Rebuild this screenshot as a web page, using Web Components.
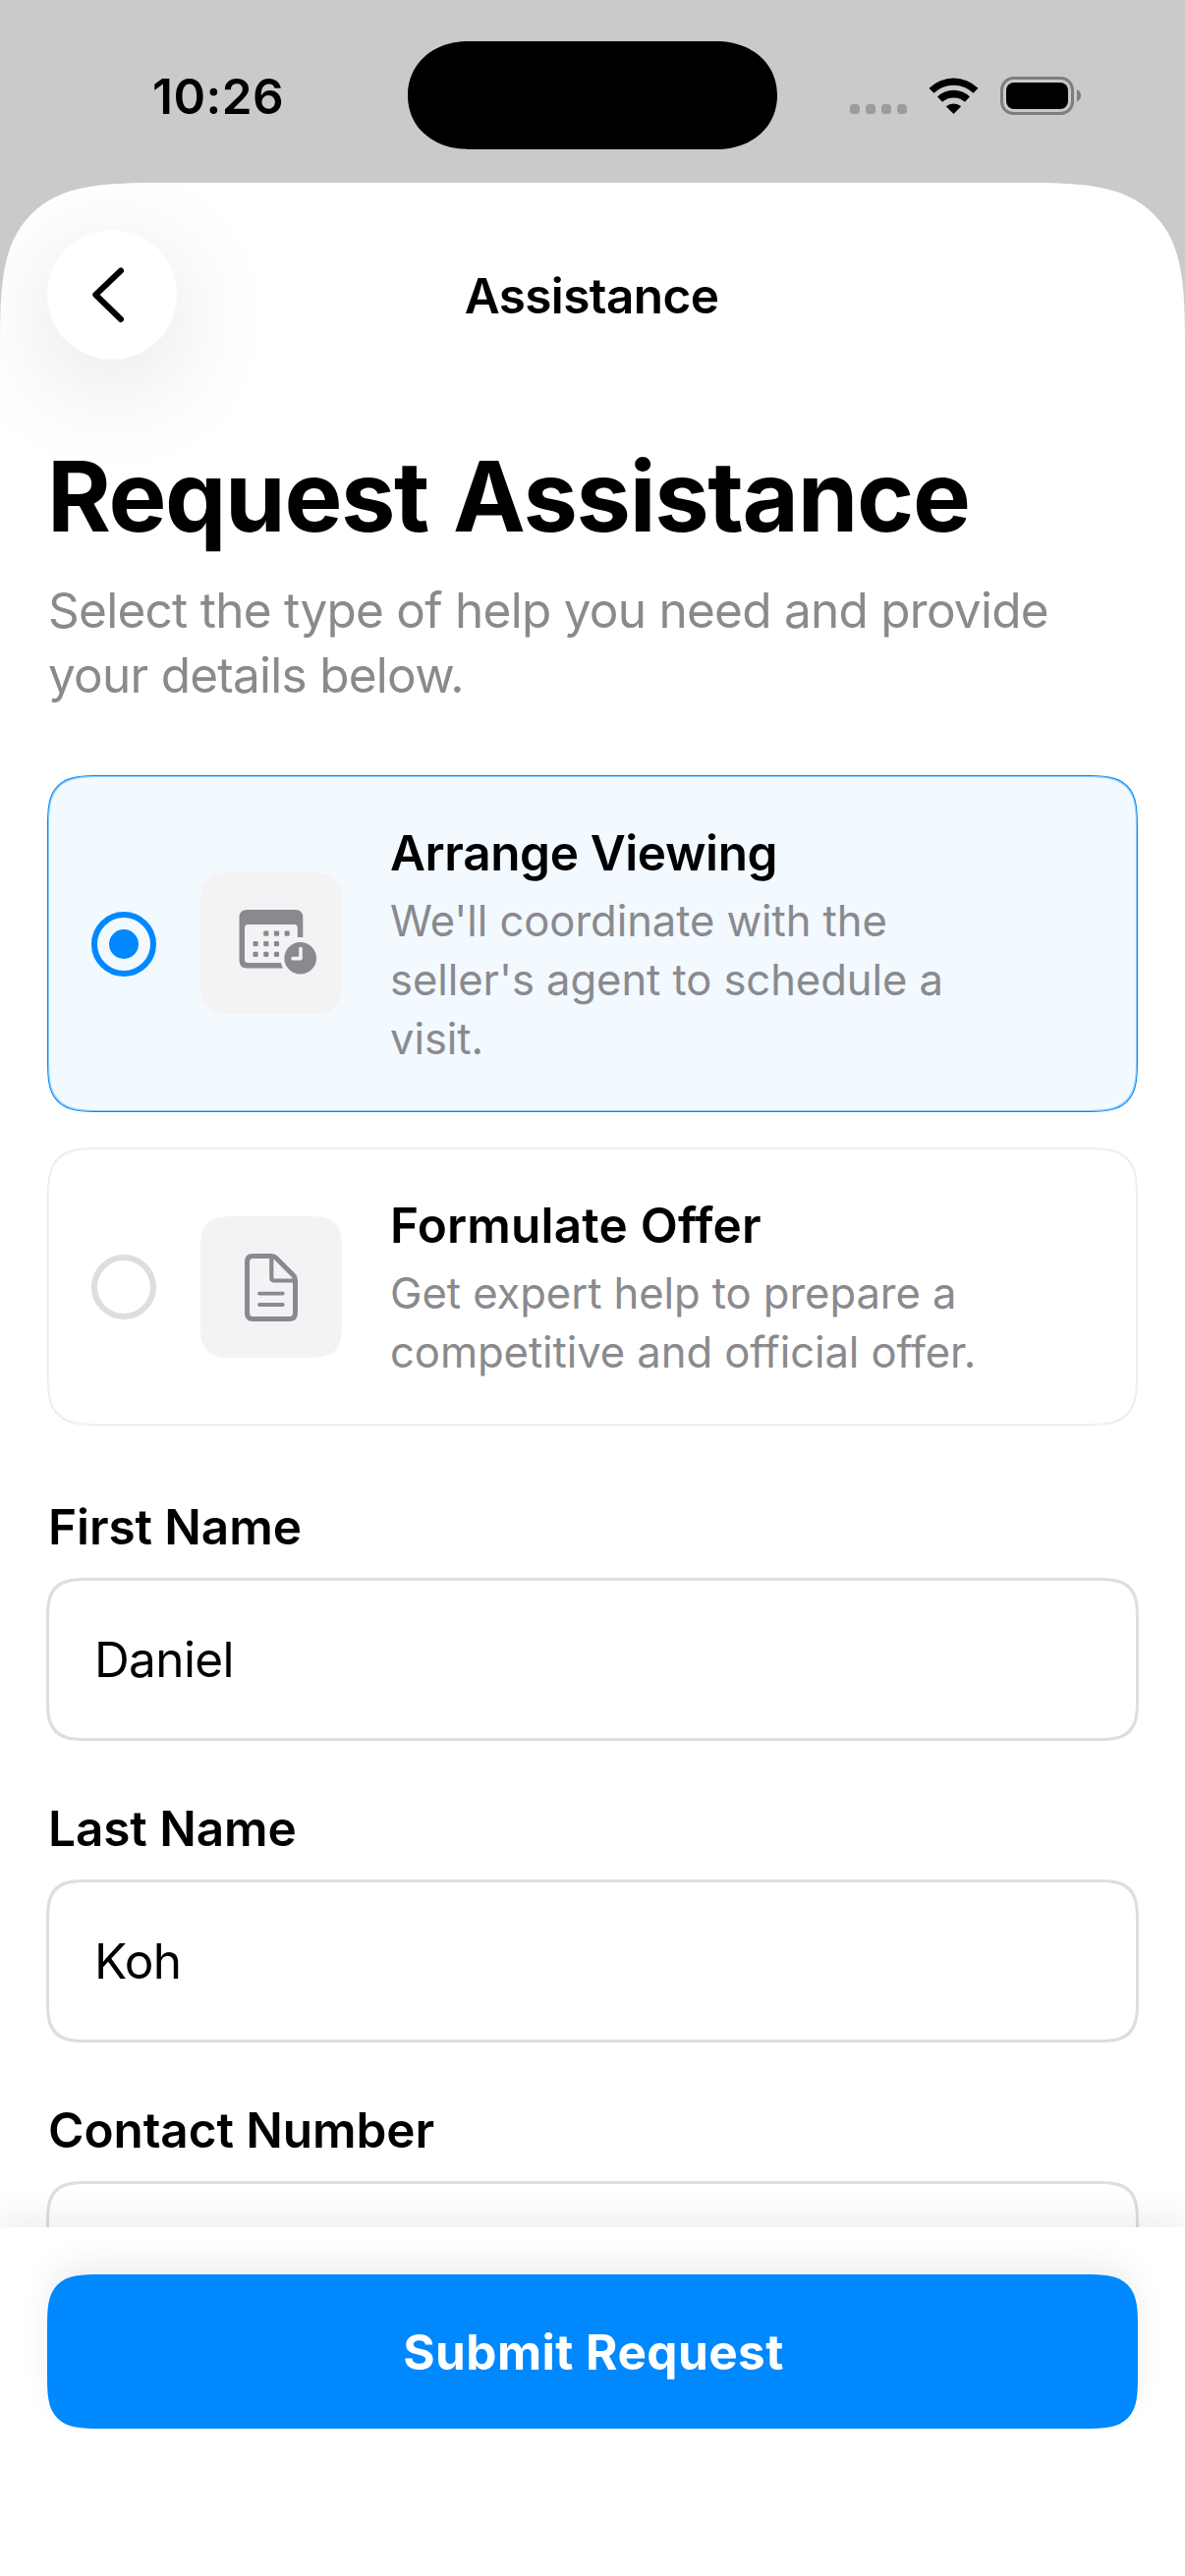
<!DOCTYPE html>
<html lang="en">
<head>
<meta charset="utf-8">
<title>Assistance</title>
<style>
body {
    margin: 0;
    width: 1206px;
    height: 2622px;
    overflow: hidden;
    background: #cacaca;
    color: #000;
    font-family: Inter, "Liberation Sans", sans-serif;
    font-size: 49.5px;
    --blue: #0088ff;
    --grey: #8a8a8e;
    --line: #dcdee0;
}
</style>
</head>
<body>

<app-screen>
    <status-bar slot="status" data-time="10:26"></status-bar>
    <nav-header slot="header">Assistance</nav-header>

    <page-intro>
        <span slot="title">Request Assistance</span>
        Select the type of help you need and provide your details below.
    </page-intro>

    <option-list>
        <option-card selected>
            <svg slot="icon" width="144" height="144" viewBox="0 0 144 144">
                <g fill="#8a8a8e">
                    <path fill-rule="evenodd" d="M47.500 38H96.500Q104.300 38 104.300 46V66H98.800V56.500Q98.800 53 95.500 53H48.200Q45 53 45 56.500V88.500Q45 92 48.500 92H82Q82.500 95 84 97.500H47.500Q39.500 97.500 39.500 89.500V46Q39.500 38 47.500 38Z"/>
                    <rect x="64.200" y="59.500" width="5.200" height="5.200" rx="1.300"/>
                    <rect x="74.900" y="59.500" width="5.200" height="5.200" rx="1.300"/>
                    <rect x="85.600" y="59.500" width="5.200" height="5.200" rx="1.300"/>
                    <rect x="53.500" y="70.100" width="5.200" height="5.200" rx="1.300"/>
                    <rect x="64.200" y="70.100" width="5.200" height="5.200" rx="1.300"/>
                    <rect x="74.900" y="70.100" width="5.200" height="5.200" rx="1.300"/>
                    <rect x="53.500" y="80.700" width="5.200" height="5.200" rx="1.300"/>
                    <rect x="64.200" y="80.700" width="5.200" height="5.200" rx="1.300"/>
                    <rect x="74.900" y="80.700" width="5.200" height="5.200" rx="1.300"/>
                    <circle cx="101.700" cy="87.200" r="16.300"/>
                </g>
                <path d="M102 77.500V87.600H94" fill="none" stroke="#f3f3f5" stroke-width="3.600" stroke-linecap="round" stroke-linejoin="round"/>
            </svg>
            <span slot="title" style="letter-spacing: -0.39px">Arrange Viewing</span>
            We'll coordinate with the seller's agent to schedule a visit.
        </option-card>

        <option-card>
            <svg slot="icon" width="144" height="144" viewBox="0 0 144 144" fill="none" stroke="#8a8a8e" stroke-width="5" stroke-linejoin="round" stroke-linecap="round">
                <path d="M53.500 40.500H72.500Q75 40.500 77 42.500L94.500 60Q96.500 62 96.500 65V98.500Q96.500 104.500 90.500 104.500H53.500Q47.500 104.500 47.500 98.500V46.500Q47.500 40.500 53.500 40.500Z"/>
                <path stroke-width="4.200" d="M72.300 41.500V62.500Q72.300 65.500 75.300 65.500H95.500"/>
                <path stroke-width="3.800" d="M60 78.600H83.800M60 90H83.800"/>
            </svg>
            <span slot="title" style="letter-spacing: 0.19px">Formulate Offer</span>
            Get expert help to prepare a competitive and official offer.
        </option-card>
    </option-list>

    <text-field data-label="First Name" data-value="Daniel"></text-field>
    <text-field data-label="Last Name" data-value="Koh"></text-field>
    <text-field data-label="Contact Number"></text-field>

    <submit-bar slot="footer">Submit Request</submit-bar>
</app-screen>

<script>
// attaches an open shadow root filled with the given markup
function render(el, html) {
  el.attachShadow({ mode: "open" }).innerHTML = html;
}

class AppScreen extends HTMLElement {
  constructor() {
    super();
    render(this, `
<style>
:host {
    display: flex;
    flex-direction: column;
    height: 2622px;
}
.sheet {
    flex: 1;
    min-height: 0;
    display: flex;
    flex-direction: column;
    overflow: hidden;
    background: #fff;
    border-radius: 114px 114px 0 0;
}
/* continuous corners where the browser knows them */
@supports (corner-shape: squircle) {
    .sheet {
        border-radius: 167px 167px 0 0;
        corner-shape: superellipse(1.71);
    }
}
.content {
    flex: 1;
    min-height: 0;
    padding: 79px 48px 0;
}
</style>
<slot name="status"></slot>
<div class="sheet">
    <slot name="header"></slot>
    <div class="content"><slot></slot></div>
    <slot name="footer"></slot>
</div>`);
  }
}

class StatusBar extends HTMLElement {
  constructor() {
    super();
    render(this, `
<style>
:host {
    display: grid;
    grid-template-columns: 415px 376px 1fr;
    align-items: center;
    box-sizing: border-box;
    height: 186px;
    padding-top: 8px;
}
.time {
    margin: 2px 0 0 155px;
    line-height: 60px;
    font-weight: 600;
    letter-spacing: 0.45px;
}
.island {
    height: 110px;
    border-radius: 62px / 55px;
    corner-shape: superellipse(1.08);
    background: #000;
}
.icons {
    display: flex;
    gap: 22px;
    margin-left: 74px;
}
svg { display: block; }
</style>
<span class="time"></span>
<div class="island"></div>
<div class="icons">
    <svg width="58" height="40" viewBox="0 0 58 40" fill="#9c9c9e">
        <rect x="0" y="29" width="10" height="10" rx="3.500"/>
        <rect x="16" y="29" width="10" height="10" rx="3.500"/>
        <rect x="32" y="29" width="10" height="10" rx="3.500"/>
        <rect x="48" y="29" width="10" height="10" rx="3.500"/>
    </svg>
    <svg width="51" height="40" viewBox="0 0 51 40">
        <path d="M0.500 12.800A35.500 35.500 0 0 1 50.500 12.800L45.500 17.800A29 29 0 0 0 5.500 17.800Z"/>
        <path d="M9 21.600A23.500 23.500 0 0 1 42 21.600L37 26.800A17.500 17.500 0 0 0 14 26.800Z"/>
        <path d="M17.800 31.300A12 12 0 0 1 33.200 31.300L25.500 39Z"/>
    </svg>
    <svg width="83" height="40" viewBox="0 0 83 40">
        <rect x="1.500" y="2.500" width="72" height="36" rx="12" fill="none" stroke="#7e7e80" stroke-width="3"/>
        <rect x="6" y="7" width="63" height="27" rx="8"/>
        <path d="M78 14Q82 16 82 20.300T78 26.500Z" fill="#7e7e80"/>
    </svg>
</div>`);
  }

  connectedCallback() {
    this.shadowRoot.querySelector(".time").textContent = this.dataset.time;
  }
}

class NavHeader extends HTMLElement {
  constructor() {
    super();
    render(this, `
<style>
:host {
    display: flex;
    align-items: center;
    padding: 48px 48px 0;
}
button, .spacer {
    width: 132px;
    height: 132px;
}
button {
    padding: 0;
    border: 0;
    border-radius: 50%;
    background: #fff;
    box-shadow: 0 24px 110px rgba(20, 20, 60, 0.12);
}
svg { display: block; }
h2 {
    flex: 1;
    margin: 2px 2px 0 0;
    text-align: center;
    font-size: inherit;
    font-weight: 600;
    line-height: 60px;
    letter-spacing: -0.6px;
}
</style>
<button aria-label="Back">
    <svg width="132" height="132" viewBox="0 0 132 132" fill="none" stroke="#000" stroke-width="6" stroke-linecap="round" stroke-linejoin="round">
        <path d="M75 41.500L49.300 66L75 91"/>
    </svg>
</button>
<h2><slot></slot></h2>
<div class="spacer"></div>`);
  }
}

class PageIntro extends HTMLElement {
  constructor() {
    super();
    render(this, `
<style>
:host { display: block; }
h1 {
    margin: 0 0 23px;
    font-size: 99px;
    font-weight: 700;
    line-height: 120px;
    letter-spacing: -1.36px;
    word-spacing: 3px;
}
p {
    margin: 0;
    padding-left: 1px;
    color: var(--grey);
    line-height: 66px;
    letter-spacing: -0.74px;
}
</style>
<h1><slot name="title"></slot></h1>
<p><slot></slot></p>`);
  }
}

class OptionList extends HTMLElement {
  constructor() {
    super();
    render(this, `
<style>
:host {
    display: flex;
    flex-direction: column;
    gap: 36px;
    margin: 69px 0 73px;
}
</style>
<slot></slot>`);
  }
}

class OptionCard extends HTMLElement {
  constructor() {
    super();
    render(this, `
<style>
:host {
    display: flex;
    align-items: center;
    box-sizing: border-box;
    height: 283px;
    padding: 0 119px 0 44px;
    border: 1px solid #e8e8e9;
    border-radius: 36px;
    box-shadow: inset 0 0 0 1px #f3f3f4;
}
:host([selected]) {
    height: 343px;
    border-color: var(--blue);
    background: #f2f9ff;
    box-shadow: inset 0 0 0 1px #8fcaff;
}
.radio {
    display: grid;
    place-items: center;
    flex: none;
    box-sizing: border-box;
    width: 66px;
    height: 66px;
    margin-right: 45px;
    border: 6px solid var(--line);
    border-radius: 50%;
}
:host([selected]) .radio { border-color: var(--blue); }
:host([selected]) .radio::after {
    content: "";
    width: 30px;
    height: 30px;
    border-radius: 50%;
    background: var(--blue);
}
.tile {
    flex: none;
    width: 144px;
    height: 144px;
    margin-right: 49px;
    border-radius: 24px;
    background: #f3f3f5;
}
:host([selected]) .tile { margin-bottom: 1px; }
@supports (corner-shape: squircle) {
    :host {
        border-radius: 55px;
        corner-shape: superellipse(1.71);
    }
    .tile {
        border-radius: 37px;
        corner-shape: superellipse(1.71);
    }
}
.text { margin-top: 5px; }
h3 {
    margin: 0 0 10px;
    font-size: inherit;
    font-weight: 600;
    line-height: 60px;
}
p {
    margin: 0;
    color: var(--grey);
    font-size: 43.6px;
    line-height: 60px;
    letter-spacing: -0.08px;
}
</style>
<div class="radio"></div>
<div class="tile"><slot name="icon"></slot></div>
<div class="text">
    <h3><slot name="title"></slot></h3>
    <p><slot></slot></p>
</div>`);
  }
}

class TextField extends HTMLElement {
  constructor() {
    super();
    render(this, `
<style>
:host {
    display: block;
    margin: 0 -1px 59px;
}
label {
    display: block;
    margin: 0 2px 22px;
    font-weight: 600;
    line-height: 60px;
    letter-spacing: -0.08px;
}
.box {
    display: flex;
    align-items: center;
    box-sizing: border-box;
    height: 166px;
    padding: 0 46px;
    border: 3px solid var(--line);
    border-radius: 30px;
    background: #fff;
    line-height: 60px;
    letter-spacing: -0.6px;
}
@supports (corner-shape: squircle) {
    .box {
        border-radius: 45px;
        corner-shape: superellipse(1.71);
    }
}
</style>
<label></label>
<div class="box"></div>`);
  }

  connectedCallback() {
    this.shadowRoot.querySelector("label").textContent = this.dataset.label;
    this.shadowRoot.querySelector(".box").textContent = this.dataset.value || "";
  }
}

class SubmitBar extends HTMLElement {
  constructor() {
    super();
    render(this, `
<style>
:host {
    display: block;
    position: relative;
    z-index: 1;
    box-sizing: border-box;
    height: 355px;
    padding: 48px 48px 0;
    background: #fff;
    box-shadow: 0 -15px 30px rgba(10, 10, 40, 0.06);
}
button {
    display: block;
    width: 100%;
    height: 157px;
    padding: 0 0 0 2px;
    border: 0;
    border-radius: 36px;
    background: var(--blue);
    box-shadow: 0 -15px 30px rgba(10, 10, 40, 0.06);
    color: #fff;
    font: inherit;
    font-weight: 700;
    letter-spacing: 0.42px;
}
@supports (corner-shape: squircle) {
    button {
        border-radius: 55px;
        corner-shape: superellipse(1.71);
    }
}
</style>
<button><slot></slot></button>`);
  }
}

customElements.define("app-screen", AppScreen);
customElements.define("status-bar", StatusBar);
customElements.define("nav-header", NavHeader);
customElements.define("page-intro", PageIntro);
customElements.define("option-list", OptionList);
customElements.define("option-card", OptionCard);
customElements.define("text-field", TextField);
customElements.define("submit-bar", SubmitBar);
</script>
</body>
</html>
